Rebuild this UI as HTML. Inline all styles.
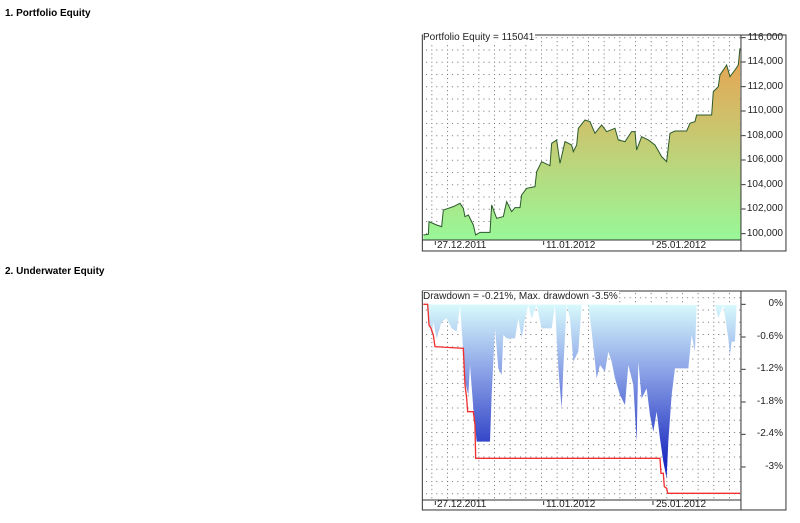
<!DOCTYPE html>
<html><head><style>
body{margin:0;width:800px;height:523px;background:#fff;font-family:"Liberation Sans",sans-serif;position:relative;overflow:hidden}
.t{position:absolute;font-weight:bold;font-size:10px;color:#000}
.l{position:absolute;font-size:10px;color:#222;line-height:12px}
.r{position:absolute;font-size:10px;color:#222;line-height:12px;right:17px;text-align:right}
svg{position:absolute;left:0;top:0}
</style></head><body>
<div class="t" style="left:5px;top:8px">1. Portfolio Equity</div>
<div class="t" style="left:5px;top:266px">2. Underwater Equity</div>
<svg width="800" height="523" viewBox="0 0 800 523">
<defs>
<pattern id="dots" width="47" height="36.75" patternUnits="userSpaceOnUse" x="2" y="0">
<rect x="0" y="0" width="3" height="3" fill="#444"/><rect x="0" y="12" width="3" height="3" fill="#444"/><rect x="0" y="24" width="3" height="3" fill="#444"/>
<rect x="15" y="0" width="3" height="3" fill="#444"/><rect x="31" y="0" width="3" height="3" fill="#444"/>
</pattern>
<linearGradient id="eq" gradientUnits="userSpaceOnUse" x1="0" y1="70" x2="0" y2="645">
<stop offset="0" stop-color="#eaa050"/><stop offset="0.45" stop-color="#c8c870"/><stop offset="1" stop-color="#98f898"/>
</linearGradient>
<linearGradient id="dd" gradientUnits="userSpaceOnUse" x1="0" y1="58" x2="0" y2="530">
<stop offset="0" stop-color="#d8fafc"/><stop offset="0.4" stop-color="#90a8e8"/><stop offset="1" stop-color="#1c2cc0"/>
</linearGradient>
</defs>
<g transform="translate(415,25) scale(0.3333)">
<rect x="22" y="30" width="1091" height="648" fill="#fff" stroke="#333" stroke-width="3"/>
<rect x="22" y="30" width="956" height="615" fill="url(#dots)" opacity="0.8"/>
<polygon fill="url(#eq)" points="25,645 25,630 40,628 42,590 65,600 80,605 85,555 100,550 115,545 135,535 145,550 150,575 160,570 175,600 182,630 195,622 225,622 230,540 245,580 265,575 275,530 290,560 300,548 315,548 320,510 335,490 360,485 365,440 380,410 405,422 410,355 425,345 435,415 450,350 470,360 475,380 485,360 490,310 510,285 525,290 540,325 560,300 575,320 600,310 610,345 630,350 650,320 660,320 665,375 680,335 700,345 720,360 740,395 755,410 765,325 780,318 815,318 825,295 840,290 845,270 890,270 895,200 910,185 915,150 935,120 945,155 960,135 970,120 975,70 977,645"/>
<polyline fill="none" stroke="#2a5a2a" stroke-width="3" points="25,630 40,628 42,590 65,600 80,605 85,555 100,550 115,545 135,535 145,550 150,575 160,570 175,600 182,630 195,622 225,622 230,540 245,580 265,575 275,530 290,560 300,548 315,548 320,510 335,490 360,485 365,440 380,410 405,422 410,355 425,345 435,415 450,350 470,360 475,380 485,360 490,310 510,285 525,290 540,325 560,300 575,320 600,310 610,345 630,350 650,320 660,320 665,375 680,335 700,345 720,360 740,395 755,410 765,325 780,318 815,318 825,295 840,290 845,270 890,270 895,200 910,185 915,150 935,120 945,155 960,135 970,120 975,70"/>
<line x1="22" y1="645" x2="978" y2="645" stroke="#333" stroke-width="3"/>
<line x1="978" y1="30" x2="978" y2="678" stroke="#333" stroke-width="3"/>
<g stroke="#333" stroke-width="3"><line x1="980" y1="38" x2="992" y2="38"/><line x1="980" y1="111" x2="992" y2="111"/><line x1="980" y1="185" x2="992" y2="185"/><line x1="980" y1="258" x2="992" y2="258"/><line x1="980" y1="332" x2="992" y2="332"/><line x1="980" y1="405" x2="992" y2="405"/><line x1="980" y1="479" x2="992" y2="479"/><line x1="980" y1="552" x2="992" y2="552"/><line x1="980" y1="626" x2="992" y2="626"/>
<line x1="61" y1="648" x2="61" y2="660"/><line x1="386" y1="648" x2="386" y2="660"/><line x1="714" y1="648" x2="714" y2="660"/></g>
</g>
<g transform="translate(415,285) scale(0.3333)">
<rect x="22" y="18" width="1091" height="657" fill="#fff" stroke="#333" stroke-width="3"/>
<rect x="22" y="18" width="956" height="627" fill="url(#dots)" opacity="0.8"/>
<polygon fill="url(#dd)" points="25,58 35,58 40,100 50,150 55,110 65,160 80,110 95,100 110,130 125,140 135,60 145,200 150,290 160,330 165,240 175,370 185,470 225,470 230,330 240,130 250,250 260,270 265,150 275,160 300,160 310,100 320,160 330,100 340,60 350,100 365,60 380,130 410,130 420,60 430,250 440,370 445,250 455,60 465,100 475,230 490,200 500,60 520,60 530,140 540,230 545,280 555,240 570,260 580,200 590,230 600,280 615,330 630,360 640,240 655,300 665,470 670,230 680,340 695,310 705,390 715,440 725,380 735,460 745,530 755,580 760,470 770,330 780,250 820,250 830,150 840,200 845,60 900,60 910,100 925,60 940,160 945,210 950,170 960,170 965,60 975,60"/>
<polyline fill="none" stroke="#f03030" stroke-width="4" points="25,58 38,58 42,120 48,130 55,150 60,185 145,190 150,300 155,340 158,380 175,380 180,420 182,520 735,520 738,565 745,565 748,605 755,610 758,625 975,625"/>
<line x1="22" y1="645" x2="978" y2="645" stroke="#333" stroke-width="3"/>
<line x1="978" y1="18" x2="978" y2="675" stroke="#333" stroke-width="3"/>
<g stroke="#333" stroke-width="3"><line x1="980" y1="58" x2="992" y2="58"/><line x1="980" y1="156" x2="992" y2="156"/><line x1="980" y1="253" x2="992" y2="253"/><line x1="980" y1="351" x2="992" y2="351"/><line x1="980" y1="448" x2="992" y2="448"/><line x1="980" y1="546" x2="992" y2="546"/>
<line x1="61" y1="648" x2="61" y2="660"/><line x1="386" y1="648" x2="386" y2="660"/><line x1="714" y1="648" x2="714" y2="660"/></g>
</g>
</svg>
<div class="l" style="left:423px;top:32px;background:#fff;padding-right:1px">Portfolio Equity = 115041</div>
<div class="r" style="top:32px">116,000</div>
<div class="r" style="top:56px">114,000</div>
<div class="r" style="top:81px">112,000</div>
<div class="r" style="top:105px">110,000</div>
<div class="r" style="top:130px">108,000</div>
<div class="r" style="top:154px">106,000</div>
<div class="r" style="top:179px">104,000</div>
<div class="r" style="top:203px">102,000</div>
<div class="r" style="top:228px">100,000</div>
<div class="l" style="left:437px;top:240px">27.12.2011</div>
<div class="l" style="left:546px;top:240px">11.01.2012</div>
<div class="l" style="left:656px;top:240px">25.01.2012</div>
<div class="l" style="left:423px;top:291px;background:#fff;padding-right:1px">Drawdown = -0.21%, Max. drawdown -3.5%</div>
<div class="r" style="top:298px">0%</div>
<div class="r" style="top:331px">-0.6%</div>
<div class="r" style="top:363px">-1.2%</div>
<div class="r" style="top:396px">-1.8%</div>
<div class="r" style="top:428px">-2.4%</div>
<div class="r" style="top:461px">-3%</div>
<div class="l" style="left:437px;top:499px">27.12.2011</div>
<div class="l" style="left:546px;top:499px">11.01.2012</div>
<div class="l" style="left:656px;top:499px">25.01.2012</div>
</body></html>
